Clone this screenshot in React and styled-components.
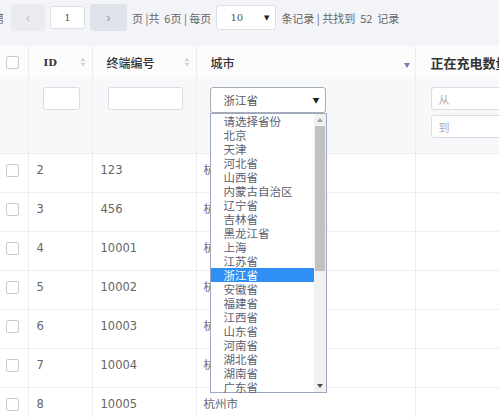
import React from 'react'
import styled, { createGlobalStyle } from 'styled-components'

const GlobalStyle = createGlobalStyle`
  html, body {
    margin: 0;
    overflow: hidden;
    background: #f3f4f8;
    font-family: "Liberation Sans", "Noto Sans CJK SC", sans-serif;
    color: #666;
  }
`

const provinces = [
  '请选择省份', '北京', '天津', '河北省', '山西省', '内蒙古自治区', '辽宁省', '吉林省',
  '黑龙江省', '上海', '江苏省', '浙江省', '安徽省', '福建省', '江西省', '山东省',
  '河南省', '湖北省', '湖南省', '广东省'
]

const rows = [
  { id: 2, code: '123' },
  { id: 3, code: '456' },
  { id: 4, code: '10001' },
  { id: 5, code: '10002' },
  { id: 6, code: '10003' },
  { id: 7, code: '10004' },
  { id: 8, code: '10005' },
]

const Pager = styled.div`
  display: flex;
  align-items: center;
  height: 27px;
  padding: 4px 0 15px;
  margin-left: -7px;
  gap: 5px;
  font-size: 11px;
  white-space: nowrap;
`

const PagerText = styled.span`
  color: #666;
  font-family: "Noto Sans CJK SC", sans-serif;
  margin-right: ${p => p.$mr || 0}px;
`

const PageBtn = styled.div`
  width: ${p => p.$w}px;
  height: 27px;
  border-radius: 3px;
  background: ${p => p.$dark ? '#dfe2e8' : '#e9ebf0'};
  color: ${p => p.$dark ? '#999' : '#c2c5cc'};
  display: flex;
  align-items: center;
  justify-content: center;
  font-size: 13px;
`

const PageInput = styled.div`
  width: 33px;
  height: 21px;
  background: #fff;
  border: 1px solid #dcdfe6;
  border-radius: 3px;
  display: flex;
  align-items: center;
  justify-content: center;
  font-size: 10px;
  font-family: "DejaVu Serif", serif;
  color: #555;
`

const SizeSelect = styled.div`
  width: 60px;
  height: 25px;
  background: #fff;
  border: 1px solid #dcdfe6;
  border-radius: 3px;
  display: flex;
  align-items: center;
  justify-content: space-between;
  padding: 0 6px 0 13px;
  box-sizing: border-box;
  font-size: 10px;
  font-family: "DejaVu Serif", serif;
  color: #555;
`

const Caret = styled.span`
  font-size: 7px;
  color: #222;
`

const Table = styled.table`
  border-collapse: collapse;
  table-layout: fixed;
  width: 620px;
  background: #fff;
`

const HeadRow = styled.tr`
  height: 32px;
  background: #fcfcfd;
`

const FilterRow = styled.tr`
  height: 75px;
  background: #f7f8fa;
  border-bottom: 1px solid #eceef2;
`

const DataRow = styled.tr`
  height: 39px;
  background: #fff;
  border-bottom: 1px solid #eceef2;
`

const Th = styled.th`
  position: relative;
  text-align: left;
  padding: 0 0 0 ${p => p.$pl}px;
  border-right: 1px solid #eceef2;
  font-size: ${p => p.$size || 12}px;
  font-weight: ${p => p.$bold ? 700 : 500};
  font-family: ${p => p.$serif ? '"DejaVu Serif", serif' : '"Noto Sans CJK SC", sans-serif'};
  color: #333;
  white-space: nowrap;
`

const FilterCell = styled.td`
  position: relative;
  vertical-align: top;
  padding: 9px 0 0 ${p => p.$pl}px;
  border-right: 1px solid #eceef2;
`

const Td = styled.td`
  vertical-align: top;
  padding: 8px 0 0 ${p => p.$pl}px;
  border-right: 1px solid #eceef2;
  font-size: 11.5px;
  line-height: 16px;
  color: #666;
  font-family: "DejaVu Sans", "Noto Sans CJK SC", sans-serif;
  white-space: nowrap;
  overflow: hidden;
`

const Check = styled.div`
  width: 11px;
  height: 11px;
  border: 1px solid #c8cbd0;
  border-radius: 2px;
  background: #fff;
  margin-top: ${p => p.$mt || 0}px;
`

const SortIcon = styled.span`
  position: absolute;
  right: ${p => p.$r}px;
  top: 50%;
  transform: translateY(-50%);
  display: flex;
  flex-direction: column;
  gap: 1px;
`

const FilterIcon = styled.span`
  position: absolute;
  right: 5px;
  top: 17px;
  width: 0;
  height: 0;
  border-left: 3.5px solid transparent;
  border-right: 3.5px solid transparent;
  border-top: 5px solid #7382ad;
`

const TextBox = styled.div`
  width: ${p => p.$w}px;
  height: 21px;
  background: #fff;
  border: 1px solid #d9dce2;
  border-radius: 3px;
  margin-bottom: 5px;
  font-size: 11px;
  color: #aaa;
  display: flex;
  align-items: center;
  box-sizing: content-box;
  padding-left: ${p => p.$pad || 0}px;
  font-family: "Noto Sans CJK SC", sans-serif;
`

const CitySelect = styled.div`
  width: 116px;
  height: 26px;
  background: #fff;
  border: 1px solid #a8acb4;
  border-radius: 3px;
  display: flex;
  align-items: center;
  justify-content: space-between;
  padding: 0 5px 0 13px;
  box-sizing: border-box;
  font-size: 11.5px;
  color: #555;
  font-family: "Noto Sans CJK SC", sans-serif;
`

const ListBox = styled.div`
  position: absolute;
  left: 13px;
  top: 35px;
  width: 117px;
  height: 280px;
  background: #fff;
  border: 1px solid #9aa6c0;
  box-sizing: border-box;
  display: flex;
  z-index: 5;
`

const Options = styled.div`
  flex: 1;
  display: flex;
  flex-direction: column;
`

const Option = styled.div`
  height: 14px;
  line-height: 14px;
  padding-left: 13px;
  font-size: 11.5px;
  font-family: "Noto Sans CJK SC", sans-serif;
  color: ${p => p.$active ? '#fff' : '#5a6272'};
  background: ${p => p.$active ? '#2f8ff5' : 'transparent'};
  white-space: nowrap;
`

const ScrollBar = styled.div`
  width: 12px;
  background: #f1f1f1;
  display: flex;
  flex-direction: column;
  align-items: center;
`

const Arrow = styled.div`
  height: 12px;
  display: flex;
  align-items: center;
  justify-content: center;
`

const Thumb = styled.div`
  width: 10px;
  height: 145px;
  background: #c1c1c1;
`

const Spacer = styled.div`
  flex: 1;
`

const Tri = ({ up, color = '#d0d3d8' }) => (
  <svg width="6" height="4" viewBox="0 0 6 4">
    <path d={up ? 'M0 4 L3 0 L6 4 Z' : 'M0 0 L3 4 L6 0 Z'} fill={color} />
  </svg>
)

const Sort = ({ r }) => (
  <SortIcon $r={r}>
    <Tri up />
    <Tri />
  </SortIcon>
)

const App = () => (
  <>
    <GlobalStyle />
    <Pager>
      <PagerText $mr={2}>第</PagerText>
      <PageBtn $w={34}>‹</PageBtn>
      <PageInput>1</PageInput>
      <PageBtn $w={37} $dark>›</PageBtn>
      <PagerText>页 |共 &nbsp;6页 | 每页</PagerText>
      <SizeSelect>10<Caret>▼</Caret></SizeSelect>
      <PagerText>条记录 | 共找到 &nbsp;52 &nbsp;记录</PagerText>
    </Pager>
    <Table>
      <colgroup>
        <col style={{ width: 28 }} />
        <col style={{ width: 64 }} />
        <col style={{ width: 104 }} />
        <col style={{ width: 219 }} />
        <col style={{ width: 205 }} />
      </colgroup>
      <thead>
        <HeadRow>
          <Th $pl={6}><Check /></Th>
          <Th $pl={15} $bold $serif $size={10}>ID<Sort r={6} /></Th>
          <Th $pl={14}>终端编号<Sort r={6} /></Th>
          <Th $pl={14}>城市<FilterIcon /></Th>
          <Th $pl={15} $bold $size={13}>正在充电数量</Th>
        </HeadRow>
        <FilterRow>
          <FilterCell $pl={0} />
          <FilterCell $pl={14}><TextBox $w={35} /></FilterCell>
          <FilterCell $pl={15}><TextBox $w={73} /></FilterCell>
          <FilterCell $pl={13}>
            <CitySelect>浙江省<Caret>▼</Caret></CitySelect>
            <ListBox>
              <Options>
                {provinces.map(p => (
                  <Option key={p} $active={p === '浙江省'}>{p}</Option>
                ))}
              </Options>
              <ScrollBar>
                <Arrow><Tri up color="#a0a0a0" /></Arrow>
                <Thumb />
                <Spacer />
                <Arrow><Tri color="#505050" /></Arrow>
              </ScrollBar>
            </ListBox>
          </FilterCell>
          <FilterCell $pl={15}>
            <TextBox $w={90} $pad={7}>从</TextBox>
            <TextBox $w={90} $pad={7}>到</TextBox>
          </FilterCell>
        </FilterRow>
      </thead>
      <tbody>
        {rows.map(r => (
          <DataRow key={r.id}>
            <Td $pl={6}><Check $mt={2} /></Td>
            <Td $pl={8}>{r.id}</Td>
            <Td $pl={8}>{r.code}</Td>
            <Td $pl={7}>杭州市</Td>
            <Td $pl={8}></Td>
          </DataRow>
        ))}
      </tbody>
    </Table>
  </>
)

export default App
